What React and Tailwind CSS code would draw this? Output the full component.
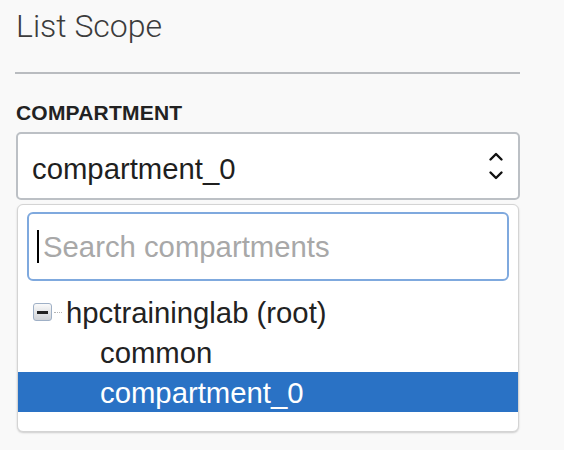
import React from "react";

function Chevrons() {
  return (
    <svg width="16" height="30" viewBox="0 0 16 30" fill="none" stroke="#111" strokeWidth="2.4" strokeLinecap="round" strokeLinejoin="round">
      <path d="M2.5 8.5 L8 3 L13.5 8.5" />
      <path d="M2.5 21.5 L8 27 L13.5 21.5" />
    </svg>
  );
}

function MinusBox() {
  return (
    <div className="flex items-center">
      <div className="w-[19px] h-[18px] rounded-[3px] border border-[#9fb0c6] bg-gradient-to-b from-[#fafafa] to-[#cfd2d6] flex items-center justify-center">
        <div className="w-[11px] h-[3px] bg-[#222]" />
      </div>
      <div className="ml-[2px] w-[8px] border-t border-dotted border-[#b5b5b5]" />
    </div>
  );
}

export default function App() {
  const font = { fontFamily: '"Liberation Sans", Arial, sans-serif' };

  return (
    <div className="min-h-screen bg-[#f9f9f9] pl-4 pt-[10px]" style={font}>
      <div className="w-[504px]">
        <h2
          className="text-[32px] leading-[32px] font-light text-[#3c3c3c]"
          style={{ fontFamily: "Roboto, sans-serif" }}
        >
          List Scope
        </h2>

        <div className="mt-[30px] h-[2px] bg-[#b9bcc0] -ml-px w-[505px]" />

        <div className="mt-[28px] text-[21px] leading-[21px] font-bold tracking-[0.2px] text-[#222]">
          COMPARTMENT
        </div>

        <div className="mt-[9px] h-[68px] rounded-[5px] border-2 border-[#bcc0c5] bg-white flex items-center justify-between pl-[14px] pr-[14px]">
          <span className="text-[29.3px] leading-[29px] text-[#1f1f1f] pt-[4px]">compartment_0</span>
          <Chevrons />
        </div>

        <div className="mt-[4px] ml-[1px] w-[502px] rounded-[6px] border border-[#d4d4d4] bg-white shadow-[0_1px_2px_rgba(0,0,0,0.18)] pt-[7px] pb-[19px]">
          <div className="mx-[9px] h-[69px] rounded-[6px] border-2 border-[#7fa9de] flex items-center pl-2">
            <span className="w-[2px] h-[33px] bg-black" />
            <span className="ml-[4px] text-[29.3px] leading-[29px] text-[#a8a8a8]">Search compartments</span>
          </div>

          <div className="mt-[11px]">
            <div className="h-[40px] flex items-center pl-[15px]">
              <MinusBox />
              <span className="ml-[4px] text-[29.3px] leading-[29px] text-[#222]">hpctraininglab (root)</span>
            </div>
            <div className="h-[40px] flex items-center pl-[82px]">
              <span className="text-[29.3px] leading-[29px] text-[#222]">common</span>
            </div>
            <div className="h-[40px] flex items-center pl-[82px] bg-[#2a72c5]">
              <span className="text-[29.3px] leading-[29px] text-white">compartment_0</span>
            </div>
          </div>
        </div>
      </div>
    </div>
  );
}
